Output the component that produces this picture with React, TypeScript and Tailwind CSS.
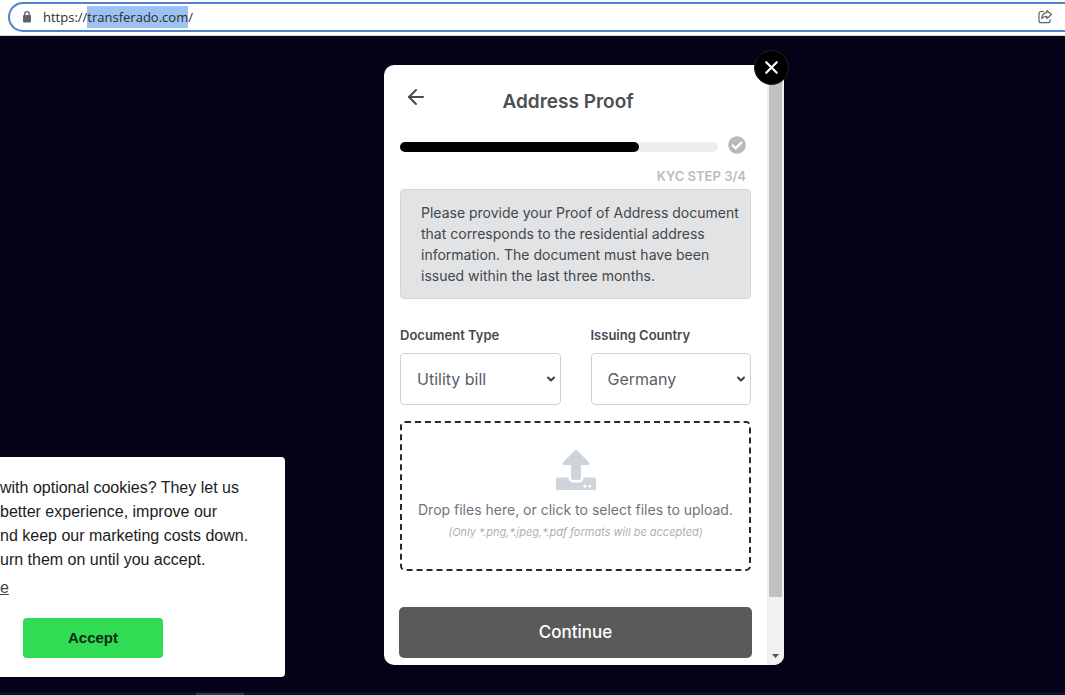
import { useState } from "react";
import { ArrowLeft, ChevronDown, X } from "lucide-react";
import { FaCheckCircle, FaUpload } from "react-icons/fa";

function AddressBar() {
  return (
    <header className="flex h-9 items-start border-b border-[#d5d5da] bg-white pl-2 pt-0.5">
      <div className="flex h-[30px] flex-1 items-center rounded-l-full border-2 border-r-0 border-[#4f81cf] pl-[11px] pr-3">
        <svg className="mr-2.5 h-3 w-3 shrink-0" viewBox="0 0 12 12" aria-hidden="true">
          <rect x="2" y="4" width="8" height="7.5" rx="1" fill="#5f6368" />
          <path d="M3.7 4.5V3a2.3 2.3 0 0 1 4.6 0v1.5" fill="none" stroke="#5f6368" strokeWidth="1.3" />
        </svg>
        <p className="flex-1 font-['Open_Sans',sans-serif] text-[13px] leading-[22px] text-[#2c2d30]">
          https://<span className="inline-block bg-[#9cc2f3]">transferado.com</span>/
        </p>
        <button type="button" aria-label="Share this page">
          <svg className="h-4 w-4" viewBox="0 0 16 16" fill="none" stroke="#5f6368" strokeWidth="1.2" strokeLinejoin="round" strokeLinecap="round" aria-hidden="true">
            <path d="M6.5 2.5H4a2 2 0 0 0-2 2v7.200a2 2 0 0 0 2 2h7a2 2 0 0 0 2-2v-1" />
            <path d="M9.800 1.500 14.500 5.500 9.800 9.500V7.300C7.500 7.200 5.800 8 4.700 9.600 5 6.300 6.700 4 9.800 3.700Z" />
          </svg>
        </button>
      </div>
    </header>
  );
}

function SelectField({ id, label, value }: { id: string; label: string; value: string }) {
  return (
    <div className="flex min-w-0 flex-1 flex-col gap-2">
      <label htmlFor={id} className="text-[13px] font-semibold leading-5 text-[#464a4e]">
        {label}
      </label>
      <div className="relative">
        <select
          id={id}
          defaultValue={value}
          className="h-[52px] w-full appearance-none rounded border border-[#ced4da] bg-white pl-4 pr-6 text-base text-[#5a6067]"
        >
          <option>{value}</option>
        </select>
        <ChevronDown className="pointer-events-none absolute right-1 top-5 h-3 w-3 text-[#3a3d40]" strokeWidth={4} />
      </div>
    </div>
  );
}

function ScrollRail() {
  return (
    <div className="flex w-[17px] shrink-0 flex-col items-center bg-[#f1f1f1]" aria-hidden="true">
      <div className="w-[13px] flex-1 bg-[#c1c1c1]" />
      <div className="flex h-[68px] items-end pb-[7px]">
        <svg className="h-1 w-[7px]" viewBox="0 0 7 4">
          <path d="M0 0h7L3.500 4Z" fill="#505050" />
        </svg>
      </div>
    </div>
  );
}

function KycDialog() {
  return (
    <section
      role="dialog"
      aria-labelledby="dialog-title"
      className="relative w-[400px] font-['Inter',sans-serif]"
    >
      <div className="flex h-[600px] overflow-hidden rounded-[10px] bg-white">
        <div className="flex min-w-0 flex-1 flex-col px-4 pt-5">
          <div className="grid grid-cols-[32px_1fr_48px] items-start">
            <button type="button" aria-label="Back" className="flex h-6 items-start justify-end pr-1">
              <ArrowLeft className="h-6 w-6 shrink-0 text-[#46494d]" strokeWidth={2} />
            </button>
            <h1 id="dialog-title" className="pl-px text-center text-[19px] font-semibold leading-[34px] text-[#4b4f54]">
              Address Proof
            </h1>
          </div>
          <div className="mt-[17px] flex items-center gap-2.5 pr-[5px]">
            <div className="mt-1 h-2.5 flex-1 rounded-full bg-[#eeeeee]">
              <div className="h-full w-3/4 rounded-full bg-black" />
            </div>
            <FaCheckCircle className="h-[18px] w-[18px] text-[#b9b9b9]" />
          </div>
          <p className="pr-[5px] pt-3 text-right text-[13px] font-semibold leading-5 text-[#bbbcbe]">KYC STEP 3/4</p>
          <p className="mt-[3px] rounded border border-[#d3d5d8] bg-[#e1e3e5] py-3 pl-5 pr-2 text-sm leading-[21px] text-[#43474b]">
            Please provide your Proof of Address document that corresponds to the residential address information. The
            document must have been issued within the last three months.
          </p>
          <div className="mt-[26px] flex gap-[30px]">
            <SelectField id="document-type" label="Document Type" value="Utility bill" />
            <SelectField id="issuing-country" label="Issuing Country" value="Germany" />
          </div>
          <button
            type="button"
            className="mt-4 flex h-[150px] flex-col items-center rounded-[5px] border-2 border-dashed border-[#292929] pt-[27px]"
          >
            <FaUpload className="h-10 w-10 text-[#ced4da]" />
            <span className="mt-2.5 whitespace-nowrap text-sm leading-5 text-[#6c757d]">
              Drop files here, or click to select files to upload.
            </span>
            <em className="mt-0.5 whitespace-nowrap text-[11px] leading-5 text-[#b0b0b0]">
              (Only *.png,*.jpeg,*.pdf formats will be accepted)
            </em>
          </button>
          <button type="button" className="-mx-px mt-9 h-[51px] rounded-[5px] bg-[#5a5a5a] text-[17px] font-medium text-white">
            Continue
          </button>
        </div>
        <ScrollRail />
      </div>
      <button
        type="button"
        aria-label="Close"
        className="absolute -right-[5px] -top-[15px] flex h-[35px] w-[35px] items-center justify-center rounded-full border border-[#222222] bg-black text-white"
      >
        <X className="h-[21px] w-[21px]" strokeWidth={2.500} />
      </button>
    </section>
  );
}

function CookieNotice() {
  return (
    <aside
      aria-label="Cookie preferences"
      className="absolute bottom-[18px] left-0 w-[285px] rounded-r bg-white pb-[19px] pt-[19px] font-['Liberation_Sans',sans-serif]"
    >
      <p className="whitespace-nowrap text-base leading-6 text-[#1c1c1c]">
        with optional cookies? They let us
        <br />
        better experience, improve our
        <br />
        nd keep our marketing costs down.
        <br />
        urn them on until you accept.
      </p>
      <a href="#cookies" className="mt-1 block text-base leading-6 text-[#444444] underline">
        e
      </a>
      <button type="button" className="ml-[23px] mt-[18px] h-10 w-[140px] rounded bg-[#31dc55] text-[15px] font-bold text-[#0d2a10]">
        Accept
      </button>
    </aside>
  );
}

export default function App() {
  const [cookies] = useState(true);
  return (
    <div className="flex min-h-screen flex-col bg-[#050118]">
      <AddressBar />
      <main className="relative flex flex-1 flex-col">
        <div className="flex flex-1 items-start justify-center pl-[103px] pt-[29px]">
          <KycDialog />
        </div>
        {cookies && <CookieNotice />}
        <div className="flex h-[3px] items-end bg-[#04122a] pl-[196px]">
          <div className="h-0.5 w-12 bg-[#2c3748]" />
        </div>
      </main>
    </div>
  );
}
